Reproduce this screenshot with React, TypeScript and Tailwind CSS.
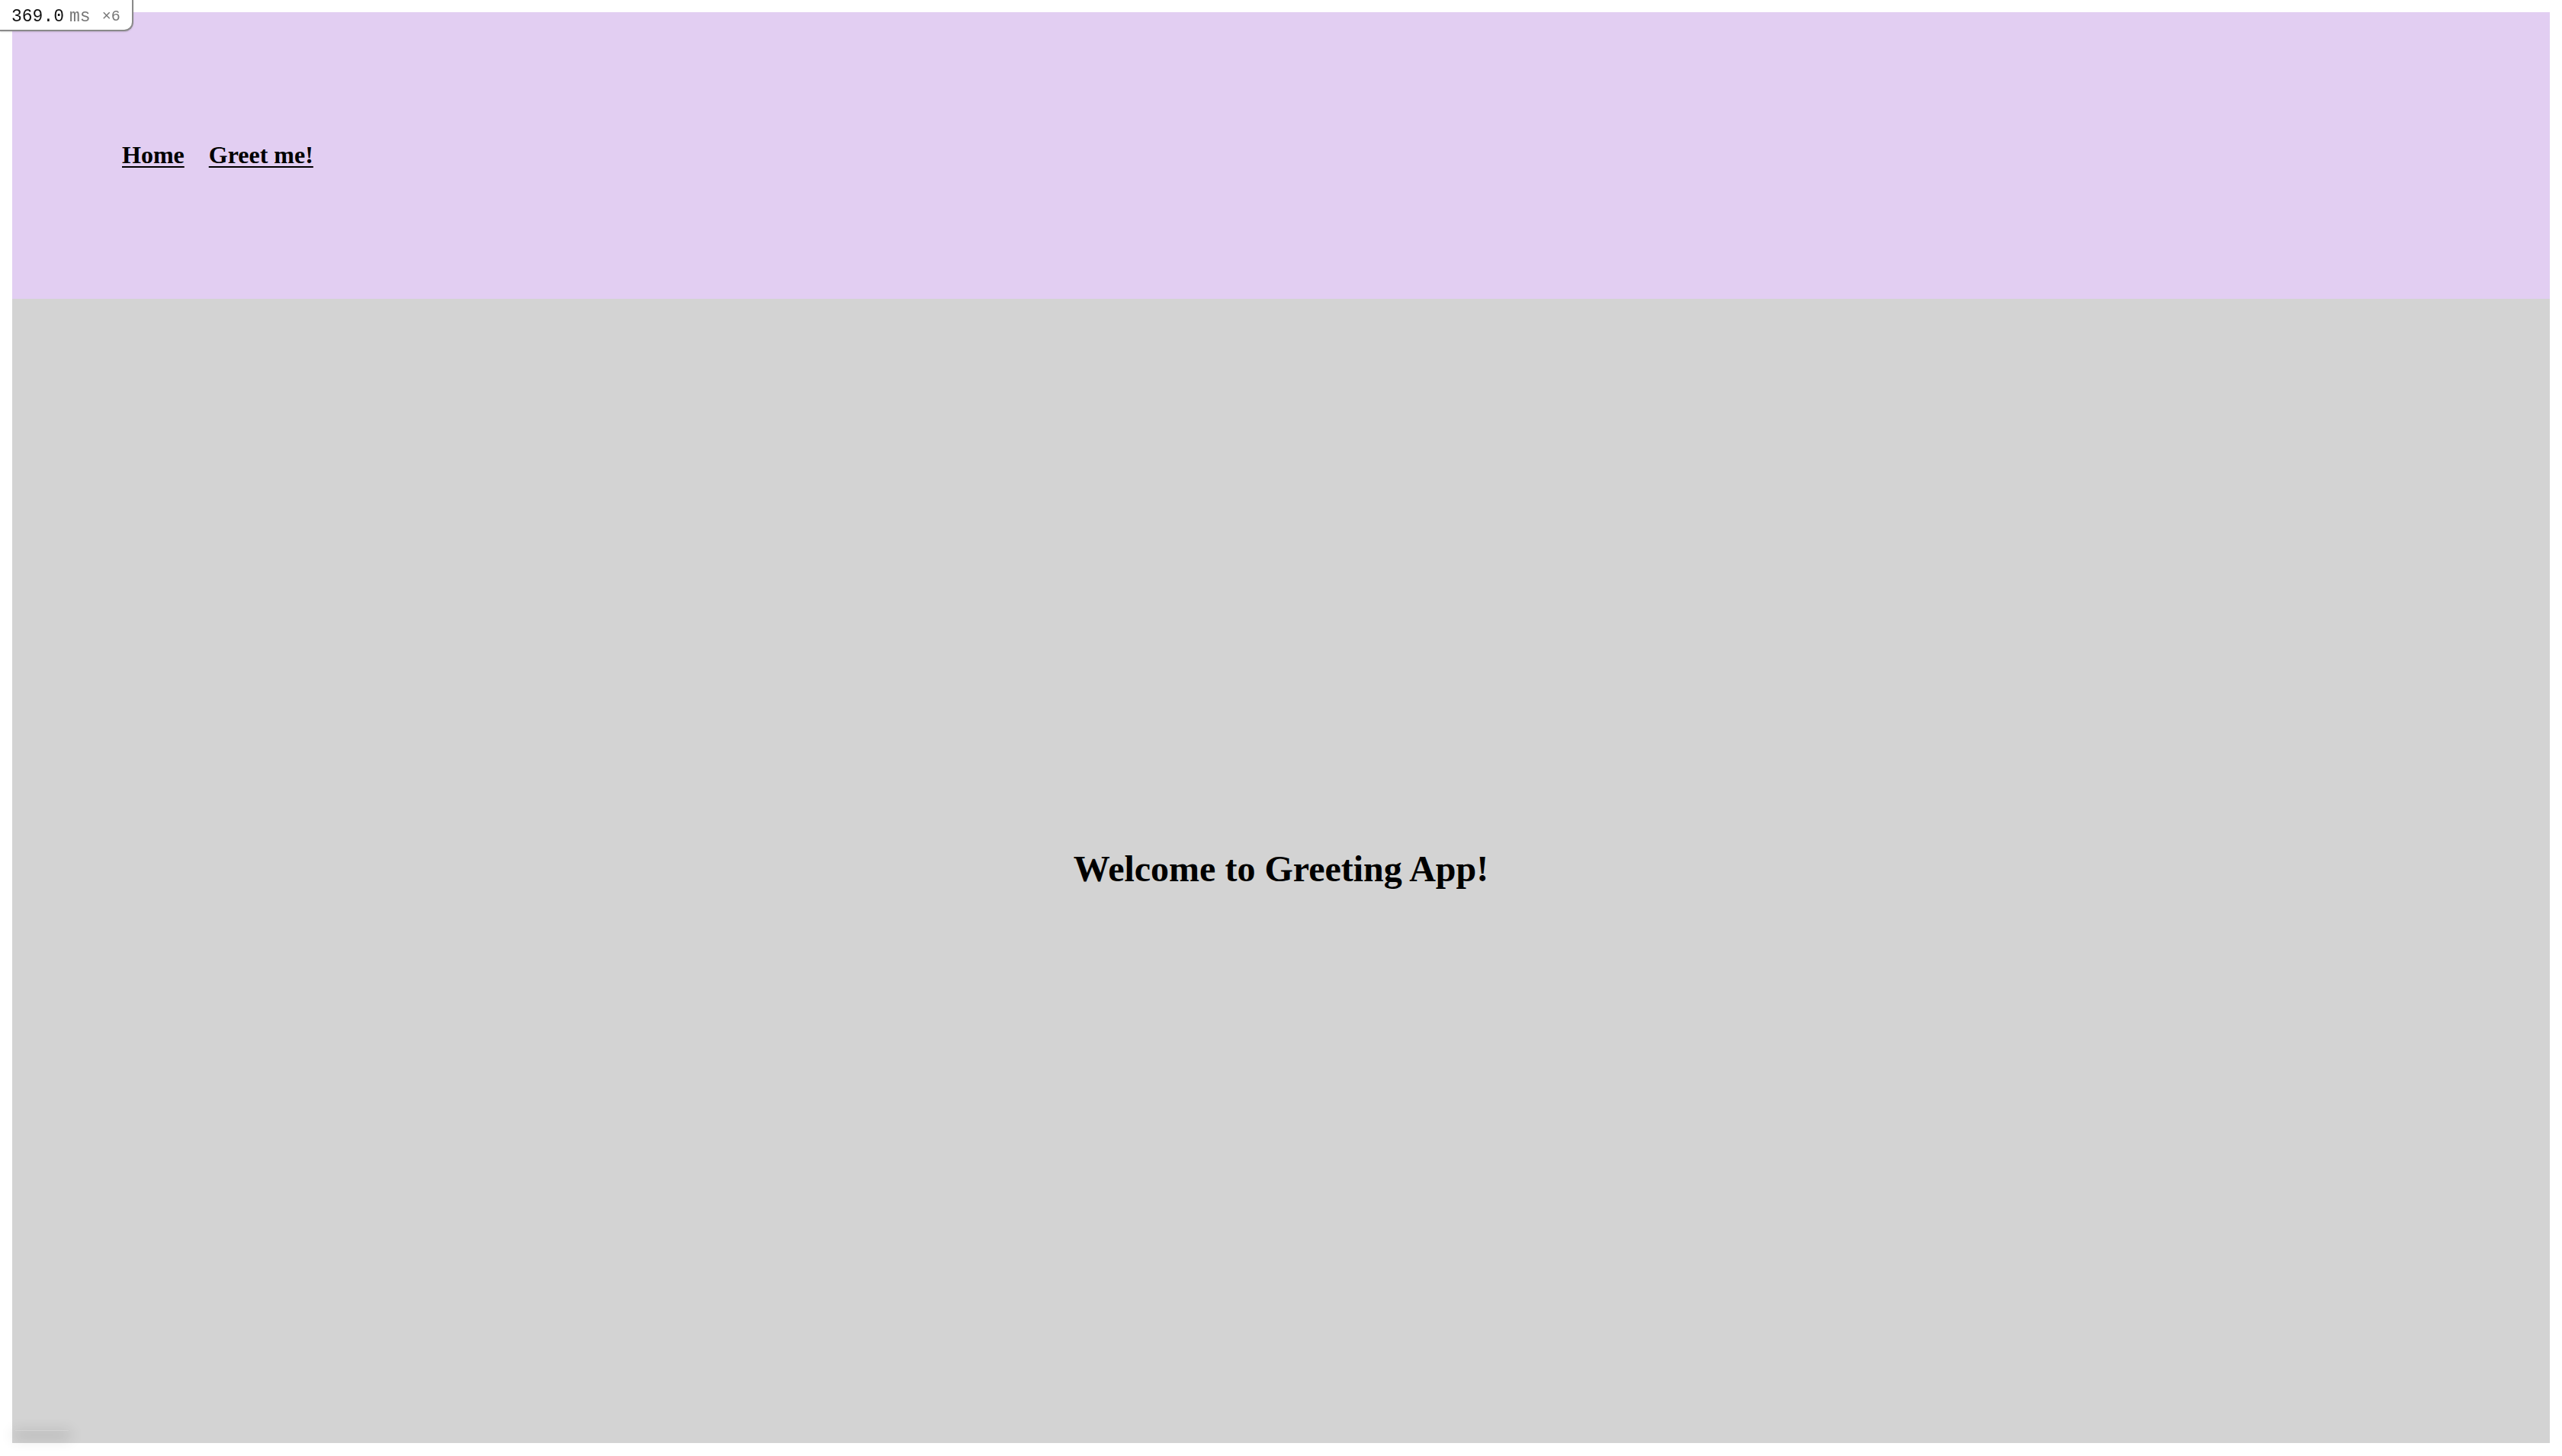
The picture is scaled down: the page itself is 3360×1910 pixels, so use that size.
import React from 'react';

function TimingBadge() {
  return (
    <div className="fixed top-0 left-0 z-20 flex h-[41px] w-[175px] items-center rounded-br-[12px] border-r-2 border-b-2 border-[#8a8a8a] bg-white pl-[15px] pt-[5px] font-['Liberation_Mono',monospace] shadow-[0_1px_2px_rgba(0,0,0,0.15)]">
      <span className="text-[23px] leading-none text-[#111]">369.0</span>
      <span className="ml-[7px] text-[23px] leading-none text-[#777]">ms</span>
      <span className="ml-[15px] text-[20px] leading-none text-[#777]">×6</span>
    </div>
  );
}

export default function App() {
  return (
    <div className="flex h-screen flex-col bg-white px-4 pt-4 pb-[17px] font-['Liberation_Serif',serif]">
      <TimingBadge />

      {/* Header */}
      <header className="flex h-[376px] shrink-0 items-center bg-[#e2cef2] px-[144px]">
        <nav className="flex items-center gap-[32px] pb-[2px] text-[32px] font-bold text-black">
          <a href="#" className="underline decoration-2 underline-offset-[4px]">Home</a>
          <a href="#" className="underline decoration-2 underline-offset-[4px]">Greet me!</a>
        </nav>
      </header>

      <main className="flex flex-1 items-center justify-center bg-[#d3d3d3] pb-[6px]">
        <h1 className="text-[48px] font-bold text-black">Welcome to Greeting App!</h1>
      </main>

      {/* dev toolbar shadow at bottom-left */}
      <div className="pointer-events-none fixed bottom-[33px] left-[20px] h-px w-[70px] shadow-[0_6px_18px_2px_rgba(0,0,0,0.3)]" />
    </div>
  );
}
